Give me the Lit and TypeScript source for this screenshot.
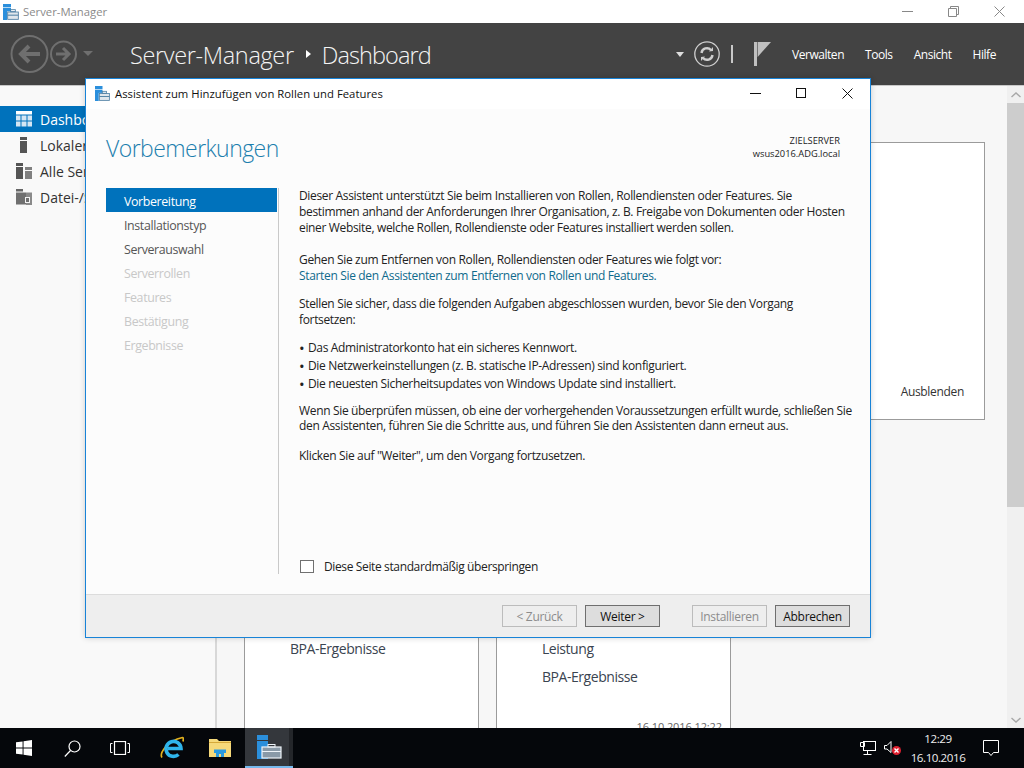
import { LitElement, html, css } from "lit";
import { customElement } from "lit/decorators.js";

const toolbox = (w: number, h: number) => html`<svg width=${w} height=${h} viewBox="0 0 24 24">
  <rect x="0" y="0" width="12" height="5" fill="#2b8fdc"/>
  <rect x="0" y="6" width="12" height="18" fill="#2b8fdc"/>
  <rect x="6" y="11" width="18" height="13" fill="#fff"/>
  <rect x="7" y="12" width="16" height="11" fill="#dfe6ec" stroke="#4d7fa3" stroke-width="1.300"/>
  <rect x="11.500" y="8.500" width="7" height="3" fill="none" stroke="#4d7fa3" stroke-width="1.300"/>
  <rect x="7" y="16" width="16" height="1.500" fill="#4d7fa3"/>
</svg>`;

@customElement("app-root")
export class AppRoot extends LitElement {
  static styles = css`
    :host { display: block; width: 1024px; height: 768px; position: relative; overflow: hidden;
      font-family: "Open Sans", "Noto Sans", sans-serif; font-size: 12px; background: #fff; color: #1e1e1e; }
    .page { display: flex; flex-direction: column; height: 768px; }
    .title { height: 23px; flex: none; display: flex; align-items: center; background: #fff; padding: 0 2px 0 3px; gap: 4px; color: #8a8a8a; }
    .title .t { flex: 1; font-size: 11.3px; }
    .caps { display: flex; height: 23px; }
    .caps span { width: 46px; display: flex; align-items: center; justify-content: center; }
    .head { height: 63px; flex: none; background: #434343; display: flex; align-items: center; color: #fff; border-bottom: 1px solid #c8c8c8; box-sizing: border-box; }
    .nav { width: 130px; flex: none; display: flex; }
    .crumb { flex: 1; font-size: 23.5px; font-weight: 300; color: #f4f4f4; display: flex; align-items: center; gap: 12px; letter-spacing: -.35px; padding-top: 2px; }
    .crumb i { width: 0; height: 0; border-left: 5px solid #fff; border-top: 4px solid transparent; border-bottom: 4px solid transparent; margin-bottom: 3px; }
    .crumb .d { letter-spacing: -.9px; margin-left: -1px; }
    .tools { display: flex; align-items: center; padding-right: 28px; }
    .caret { margin-right: 10px; }
    .sep { margin: 0 21px 0 11px; }
    .menu { display: flex; gap: 21px; font-size: 12px; color: #fff; margin: 1px 0 0 21px; letter-spacing: -.45px; }
    .work { flex: 1; display: flex; min-height: 0; background: #f7f7f7; }
    .side { width: 215px; flex: none; background: #f9f9f9; border-right: 2px solid #d8d8d8; padding-top: 20px; font-size: 14px; }
    .si { height: 26px; display: flex; align-items: center; gap: 8px; padding-left: 16px; color: #333; }
    .si.on { background: #0072bc; color: #fff; }
    .si svg { flex: none; }
    .scroll { width: 17px; flex: none; background: #f0f0f0; display: flex; flex-direction: column; align-items: center; }
    .thumb { height: 404px; background: #cdcdcd; width: 17px; flex: none; }
    .sb { height: 17px; display: flex; align-items: center; justify-content: center; flex: none; }
    .fill { flex: 1; }
    .cols { flex: 1; position: relative; overflow: hidden; }
    .card { position: absolute; border: 1px solid #9b9b9b; background: #fff; box-sizing: border-box; }
    .top { left: 0; right: 22px; top: 56px; height: 278px; }
    .hide { position: absolute; right: 20px; bottom: 19px; font-size: 12px; color: #333; letter-spacing: -.32px; }
    .low1 { left: 27px; width: 235px; top: 539px; height: 140px; }
    .low2 { left: 279px; width: 235px; top: 539px; height: 140px; }
    .low { position: absolute; left: 45px; font-size: 14px; color: #3a4450; letter-spacing: -.45px; }
    .l1 { top: 13px; }
    .l2 { top: 41px; }
    .stamp { position: absolute; right: 8px; top: 93px; font-size: 11px; color: #666; letter-spacing: -.1px; }
    .task { height: 40px; flex: none; background: #05070b; display: flex; align-items: stretch; color: #fff; position: relative; }
    .tb { width: 48px; display: flex; align-items: center; justify-content: center; flex: none; }
    .tb.ie { width: 55px; }
    .tb.fold { width: 42px; margin-right: 4px; }
    .tb.act { background: linear-gradient(90deg, #34373c 44px, #24262a 44px); border-bottom: 2px solid #76b9ed; box-sizing: border-box; }
    .tray { margin-left: auto; display: flex; align-items: center; padding-right: 25px; }
    .net { margin-right: 8px; }
    .vol { margin-right: 7px; }
    .clock { text-align: center; font-size: 11.6px; line-height: 19px; width: 60px; color: #eee; margin: 0 15px 0 0; letter-spacing: -.45px; }
    .dlg { position: absolute; left: 85px; top: 78px; width: 786px; height: 560px; box-sizing: border-box; border: 1px solid #1883d7; background: #fcfcfc; display: flex; flex-direction: column; box-shadow: 0 0 6px rgba(0,0,0,.18); }
    .dt { height: 30px; flex: none; background: #fff; display: flex; align-items: center; padding: 0 0 2px 9px; box-sizing: border-box; gap: 5px; font-size: 11.3px; color: #111; }
    .dt .t { flex: 1; letter-spacing: .02px; }
    .dcaps { display: flex; height: 28px; }
    .dcaps span { width: 46px; display: flex; align-items: center; justify-content: center; }
    .dbody { flex: 1; display: flex; flex-direction: column; padding: 0 20px; min-height: 0; }
    .dhead { display: flex; justify-content: space-between; height: 57px; flex: none; padding-top: 22px; }
    .dhead h1 { margin: 0; font-size: 23px; font-weight: 300; color: #1c7fae; line-height: 34px; letter-spacing: -.55px; }
    .ziel { text-align: right; font-size: 9.3px; line-height: 13px; color: #222; padding-top: 3px; padding-right: 10px; }
    .dmain { flex: 1; display: flex; min-height: 0; padding-bottom: 20px; }
    .steps { width: 171px; flex: none; }
    .st { height: 24px; box-sizing: border-box; display: flex; align-items: center; padding: 2px 0 0 18px; font-size: 12.4px; color: #555; letter-spacing: -.37px; }
    .st.on { background: #0072bc; color: #fff; }
    .st.off { color: #c8c8c8; }
    .div { width: 1px; background: #c9c9c9; margin: 0 20px 0 1px; flex: none; }
    .txt { flex: 1; font-size: 12px; line-height: 16px; color: #222; display: flex; flex-direction: column; letter-spacing: -.34px; }
    .txt p { margin: 0; white-space: nowrap; }
    .txt p.tight { line-height: 15px; }
    .link { color: #0f6a8c; }
    .gap { height: 16px; flex: none; }
    .gap.g12 { height: 12px; }
    .gap.g11 { height: 11px; }
    .gap.g10 { height: 10px; }
    .gap.g15 { height: 15px; }
    .li { display: flex; gap: 2px; height: 18px; align-items: center; white-space: nowrap; }
    .li b { width: 7px; font-weight: 400; font-size: 15px; line-height: 14px; }
    .chk { display: flex; align-items: center; gap: 10px; margin-top: auto; height: 14px; padding: 0 0 1px 1px; letter-spacing: -.37px; }
    .chk .lab { padding-top: 2px; }
    .box { width: 14px; height: 13px; box-sizing: border-box; border: 1px solid #707070; background: #fff; }
    .foot { height: 42px; flex: none; background: #eeeeee; border-top: 1px solid #dcdcdc; display: flex; align-items: center; padding: 0 20px 0 416px; }
    .btn { width: 75px; height: 22px; box-sizing: border-box; border: 1px solid #6f6f6f; background: #dddddd; display: flex; align-items: center; justify-content: center; font-size: 12px; color: #111; letter-spacing: -.3px; margin-right: 8px; }
    .btn.dis { border-color: #bcbcbc; background: #eee; color: #8c8c8c; }
    .btn.last { margin: 0; }
    .sp { width: 24px; }
  `;

  render() {
    const steps = ["Vorbereitung", "Installationstyp", "Serverauswahl", "Serverrollen", "Features", "Bestätigung", "Ergebnisse"];
    return html`
      <div class="page">
        <div class="title">
          ${toolbox(16, 16)}
          <span class="t">Server-Manager</span>
          <div class="caps">
            <span><svg width="11" height="1"><rect width="11" height="1" fill="#888"/></svg></span>
            <span><svg width="11" height="11" fill="none" stroke="#888"><path d="M.5 2.500h8v8h-8zM2.500 2.500v-2h8v8h-2"/></svg></span>
            <span><svg width="11" height="11" stroke="#888"><path d="M.5.500l10 10M10.500.500l-10 10"/></svg></span>
          </div>
        </div>
        <div class="head">
          <div class="nav">
            <svg width="130" height="62" viewBox="0 0 130 62" fill="none" stroke="#6f6f6f">
              <circle cx="29.500" cy="31" r="18" stroke-width="2"/>
              <path d="M40 31H21M29 23l-8 8 8 8" stroke-width="4"/>
              <circle cx="63.500" cy="31" r="12.500" stroke-width="2"/>
              <path d="M56 31h12M63 25l6 6-6 6" stroke-width="3"/>
              <path d="M83 28h10l-5 5z" fill="#6f6f6f" stroke="none"/>
            </svg>
          </div>
          <div class="crumb"><span>Server-Manager</span><i></i><span class="d">Dashboard</span></div>
          <div class="tools">
            <svg class="caret" width="8" height="5"><path d="M0 0h8l-4 5z" fill="#ddd"/></svg>
            <svg width="26" height="26" viewBox="0 0 26 26" fill="none" stroke="#cfcfcf">
              <circle cx="13" cy="13" r="12.200" stroke-width="1.300"/>
              <path d="M7.500 12a5.500 5.500 0 0 1 9.500-3M18.500 14a5.500 5.500 0 0 1-9.500 3" stroke-width="2.400"/>
              <path d="M15 10.500l4-.5v-4zM11 15.500l-4 .5v4z" fill="#cfcfcf" stroke="none"/>
            </svg>
            <svg class="sep" width="2" height="18"><rect width="2" height="18" fill="#c8c8c8"/></svg>
            <svg width="17" height="24" viewBox="0 0 17 24"><path d="M0 0h3v24H0z" fill="#c0c0c0"/><path d="M3.600 0H17L3.600 15z" fill="#c0c0c0"/></svg>
            <div class="menu"><span>Verwalten</span><span>Tools</span><span>Ansicht</span><span>Hilfe</span></div>
          </div>
        </div>
        <div class="work">
          <div class="side">
            <div class="si on">
              <svg width="16" height="16" viewBox="0 0 16 16"><rect width="16" height="3.500" fill="#fff"/><g fill="#d5e6f3"><rect y="4.500" width="4.500" height="5"/><rect x="5.500" y="4.500" width="5" height="5"/><rect x="11.500" y="4.500" width="4.500" height="5"/><rect y="10.500" width="4.500" height="5"/><rect x="5.500" y="10.500" width="5" height="5"/><rect x="11.500" y="10.500" width="4.500" height="5"/></g></svg>
              <span>Dashboard</span>
            </div>
            <div class="si">
              <svg width="16" height="16" viewBox="0 0 16 16"><rect x="4" y="0" width="7" height="3" fill="#555"/><rect x="4" y="4" width="7" height="12" fill="#555"/></svg>
              <span>Lokaler Server</span>
            </div>
            <div class="si">
              <svg width="16" height="16" viewBox="0 0 16 16"><rect width="7" height="3" fill="#555"/><rect y="4" width="7" height="12" fill="#555"/><rect x="9" y="4" width="7" height="3" fill="#808080"/><rect x="9" y="8" width="7" height="8" fill="#808080"/></svg>
              <span>Alle Server</span>
            </div>
            <div class="si">
              <svg width="16" height="16" viewBox="0 0 16 16"><rect y="0" width="7" height="2.500" fill="#666"/><rect y="3.500" width="10" height="12" fill="#707070"/><path d="M10 3.500h6V16h-6z" fill="#8a8a8a"/><path d="M9 8h5v6H9z" fill="#f4f4f4"/><path d="M10 9h3v4h-3z" fill="#707070"/></svg>
              <span>Datei-/Speicherdienste</span>
            </div>
          </div>
          <div class="cols">
            <div class="card top"><span class="hide">Ausblenden</span></div>
            <div class="card low1"><span class="low l1">BPA-Ergebnisse</span></div>
            <div class="card low2"><span class="low l1">Leistung</span><span class="low l2">BPA-Ergebnisse</span><span class="stamp">16.10.2016 12:22</span></div>
          </div>
          <div class="scroll">
            <div class="sb"><svg width="10" height="6" fill="none" stroke="#a8a8a8" stroke-width="1.400"><path d="M.5 5l4.500-4 4.500 4"/></svg></div>
            <div class="thumb"></div>
            <div class="fill"></div>
            <div class="sb"><svg width="10" height="6" fill="none" stroke="#a8a8a8" stroke-width="1.400"><path d="M.5 1l4.500 4 4.500-4"/></svg></div>
          </div>
        </div>
        <div class="task">
          <div class="tb"><svg width="16" height="16" viewBox="0 0 17 17" fill="#fff"><path d="M0 2.500l7-1v6.500H0zM8 1.300L17 0v8H8zM0 9h7v6.500l-7-1zM8 9h9v8l-9-1.300z"/></svg></div>
          <div class="tb"><svg width="17" height="17" viewBox="0 0 17 17" fill="none" stroke="#fff" stroke-width="1.200"><circle cx="10.500" cy="6.500" r="5.500"/><path d="M6.500 10.500L.8 16.500"/></svg></div>
          <div class="tb"><svg width="20" height="14" viewBox="0 0 20 14" fill="none" stroke="#fff"><rect x="4.500" y=".5" width="11" height="13" stroke-width="1.200"/><path d="M2.500 2.500H.5v9h2M17.500 2.500h2v9h-2"/></svg></div>
          <div class="tb ie"><svg width="24" height="24" viewBox="0 0 24 24" fill="none">
            <path d="M2 21.500C-.5 18 6 5 22.500 1.500c1 0 1 1.500 .5 4" stroke="#e3b21f" stroke-width="1.700"/>
            <path d="M8 12.500h13a7.500 7.500 0 1 0-2.500 6" stroke="#2fb5ec" stroke-width="3.600"/>
          </svg></div>
          <div class="tb fold"><svg width="22" height="18" viewBox="0 0 22 18"><path d="M0 0h8l2 2h12v16H0z" fill="#f6d97a"/><rect x="0" y="3" width="22" height="1" fill="#d6a93a"/><path d="M5 10.500h12V14h-2v4h-3v-3h-2v3H7v-4H5z" fill="#2a9ae0"/></svg></div>
          <div class="tb act"><svg width="26" height="24" viewBox="0 0 26 24" style="margin-right:1px"><rect x="1" y="0" width="11" height="5" fill="#2b8fdc"/><rect x="1" y="6" width="11" height="18" fill="#2b8fdc"/><rect x="6" y="12" width="19" height="11" fill="#8a9aa8" stroke="#eef3f8" stroke-width="1.200"/><rect x="12" y="9.500" width="7" height="2.500" fill="none" stroke="#eef3f8"/><rect x="6" y="16" width="19" height="1" fill="#eef3f8"/></svg></div>
          <div class="tray">
            <svg class="net" width="16" height="14" viewBox="0 0 16 14" fill="none" stroke="#fff"><rect x="3.500" y=".5" width="12" height="9"/><path d="M.5 1.500h4v4h-4zM7.500 9.500v4M3.500 13.500h8"/></svg>
            <svg class="vol" width="17" height="14" viewBox="0 0 17 14"><path d="M.5 4.500h2.500l4-4v11l-4-3.500H.5z" fill="none" stroke="#fff"/><circle cx="12.500" cy="9.500" r="4.500" fill="#e02030"/><path d="M10.500 7.500l4 4M14.500 7.500l-4 4" stroke="#fff" stroke-width="1.400"/></svg>
            <div class="clock">12:29<br/>16.10.2016</div>
            <svg width="16" height="16" viewBox="0 0 16 16" fill="none" stroke="#fff"><path d="M.5.500h15v12h-5L8 15.500 5.500 12.500h-5z"/></svg>
          </div>
        </div>
      </div>
      <div class="dlg">
        <div class="dt">
          ${toolbox(15, 15)}
          <span class="t">Assistent zum Hinzufügen von Rollen und Features</span>
          <div class="dcaps">
            <span><svg width="11" height="1"><rect width="11" height="1" fill="#111"/></svg></span>
            <span><svg width="10" height="10" fill="none" stroke="#111"><rect x=".5" y=".5" width="9" height="9"/></svg></span>
            <span><svg width="11" height="11" stroke="#111"><path d="M.5.500l10 10M10.500.500l-10 10"/></svg></span>
          </div>
        </div>
        <div class="dbody">
          <div class="dhead">
            <h1>Vorbemerkungen</h1>
            <div class="ziel">ZIELSERVER<br/>wsus2016.ADG.local</div>
          </div>
          <div class="dmain">
            <div class="steps">
              ${steps.map((s, i) => html`<div class="st ${i === 0 ? "on" : i > 2 ? "off" : ""}">${s}</div>`)}
            </div>
            <div class="div"></div>
            <div class="txt">
              <p>Dieser Assistent unterstützt Sie beim Installieren von Rollen, Rollendiensten oder Features. Sie</p>
              <p>bestimmen anhand der Anforderungen Ihrer Organisation, z. B. Freigabe von Dokumenten oder Hosten</p>
              <p>einer Website, welche Rollen, Rollendienste oder Features installiert werden sollen.</p>
              <div class="gap"></div>
              <p>Gehen Sie zum Entfernen von Rollen, Rollendiensten oder Features wie folgt vor:</p>
              <p class="link">Starten Sie den Assistenten zum Entfernen von Rollen und Features.</p>
              <div class="gap g12"></div>
              <p>Stellen Sie sicher, dass die folgenden Aufgaben abgeschlossen wurden, bevor Sie den Vorgang</p>
              <p>fortsetzen:</p>
              <div class="gap g11"></div>
              <div class="li"><b>•</b><span>Das Administratorkonto hat ein sicheres Kennwort.</span></div>
              <div class="li"><b>•</b><span>Die Netzwerkeinstellungen (z. B. statische IP-Adressen) sind konfiguriert.</span></div>
              <div class="li"><b>•</b><span>Die neuesten Sicherheitsupdates von Windows Update sind installiert.</span></div>
              <div class="gap g10"></div>
              <p class="tight">Wenn Sie überprüfen müssen, ob eine der vorhergehenden Voraussetzungen erfüllt wurde, schließen Sie</p>
              <p class="tight">den Assistenten, führen Sie die Schritte aus, und führen Sie den Assistenten dann erneut aus.</p>
              <div class="gap g15"></div>
              <p>Klicken Sie auf "Weiter", um den Vorgang fortzusetzen.</p>
              <div class="chk"><span class="box"></span><span class="lab">Diese Seite standardmäßig überspringen</span></div>
            </div>
          </div>
        </div>
        <div class="foot">
          <div class="btn dis">&lt; Zurück</div>
          <div class="btn">Weiter &gt;</div>
          <div class="sp"></div>
          <div class="btn dis">Installieren</div>
          <div class="btn last">Abbrechen</div>
        </div>
      </div>
    `;
  }
}
